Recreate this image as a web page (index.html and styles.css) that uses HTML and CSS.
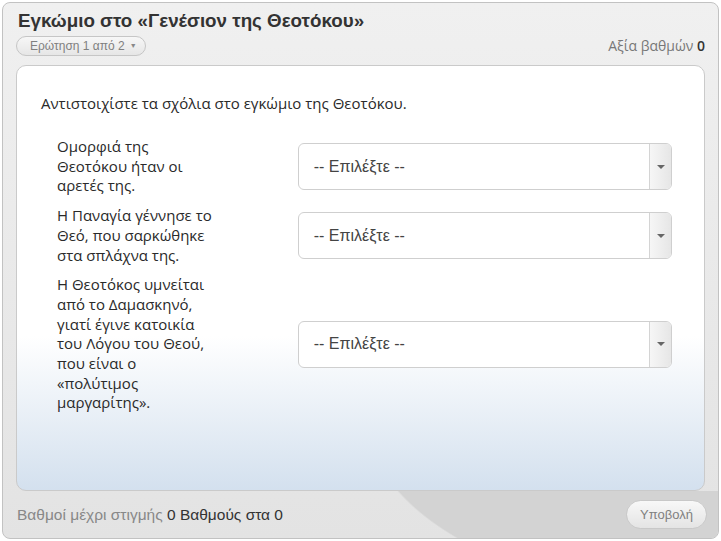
FILE: index.html
```html
<!DOCTYPE html>
<html lang="el">
<head>
<meta charset="utf-8">
<title>Εγκώμιο στο «Γενέσιον της Θεοτόκου»</title>
<link rel="stylesheet" href="styles.css">
</head>
<body>
<div class="quiz">
  <header class="quiz-head">
    <h1 class="quiz-title">Εγκώμιο στο «Γενέσιον της Θεοτόκου»</h1>
    <div class="quiz-meta">
      <button class="q-pill">Ερώτηση 1 από 2 <span class="caret">▼</span></button>
      <div class="worth">Αξία βαθμών <b>0</b></div>
    </div>
  </header>
  <main class="panel">
    <p class="instr">Αντιστοιχίστε τα σχόλια στο εγκώμιο της Θεοτόκου.</p>
    <div class="rows">
      <div class="row">
        <div class="label">Ομορφιά της Θεοτόκου ήταν οι αρετές της.</div>
        <div class="select"><span class="sel-text">-- Επιλέξτε --</span><span class="sel-arrow"><span class="tri"></span></span></div>
      </div>
      <div class="row">
        <div class="label">Η Παναγία γέννησε το Θεό, που σαρκώθηκε στα σπλάχνα της.</div>
        <div class="select"><span class="sel-text">-- Επιλέξτε --</span><span class="sel-arrow"><span class="tri"></span></span></div>
      </div>
      <div class="row">
        <div class="label">Η Θεοτόκος υμνείται από το Δαμασκηνό, γιατί έγινε κατοικία του Λόγου του Θεού, που είναι ο «πολύτιμος μαργαρίτης».</div>
        <div class="select"><span class="sel-text">-- Επιλέξτε --</span><span class="sel-arrow"><span class="tri"></span></span></div>
      </div>
    </div>
  </main>
  <footer class="quiz-foot">
    <div class="score">Βαθμοί μέχρι στιγμής <b>0 Βαθμούς στα 0</b></div>
    <button class="submit">Υποβολή</button>
  </footer>
</div>
</body>
</html>
```
FILE: styles.css
```css
html, body {
  margin: 0;
  padding: 0;
  background: #ffffff;
}
body {
  padding: 2px;
  font-family: "Liberation Sans", Arial, sans-serif;
}
.quiz {
  box-sizing: border-box;
  height: 537px;
  width: 717px;
  border: 1px solid #c2c2c2;
  border-radius: 8px;
  display: flex;
  flex-direction: column;
  background: linear-gradient(#f0f0f0, #e3e3e3);
  overflow: hidden;
}
.quiz-head {
  padding: 7px 13px 0 13px;
}
.quiz-title {
  margin: 0 0 0 2px;
  font-size: 18.8px;
  line-height: 22px;
  font-weight: bold;
  color: #333;
}
.quiz-meta {
  display: flex;
  justify-content: space-between;
  align-items: center;
  margin-top: 3px;
  height: 21px;
}
.q-pill {
  font-family: "Liberation Sans", Arial, sans-serif;
  font-size: 12px;
  color: #808080;
  height: 20px;
  padding: 0 8px 0 13px;
  border: 1px solid #c6c6c6;
  border-radius: 10px;
  background: linear-gradient(#f7f7f7, #e6e6e6);
  display: flex;
  align-items: center;
  gap: 5px;
}
.caret {
  font-size: 7px;
  color: #888;
}
.worth {
  font-family: "Open Sans", sans-serif;
  font-size: 14px;
  color: #777;
}
.worth b {
  color: #333;
  font-weight: 600;
}
.panel {
  box-sizing: border-box;
  margin: 9px 13px 0 13px;
  height: 426px;
  border: 1px solid #cacaca;
  border-radius: 10px;
  background: linear-gradient(#ffffff 0, #ffffff 270px, #d3e0ee 426px);
  padding: 27px 32px 0 24px;
  font-family: "Open Sans", sans-serif;
  color: #2a2a2a;
}
.instr {
  margin: 0;
  font-size: 15px;
  line-height: 20px;
}
.rows {
  margin-top: 24px;
  display: flex;
  flex-direction: column;
  gap: 10px;
}
.row {
  display: flex;
  align-items: center;
}
.label {
  box-sizing: border-box;
  width: 257px;
  padding-left: 16px;
  padding-right: 82px;
  font-size: 15px;
  line-height: 19.7px;
}
.select {
  box-sizing: border-box;
  width: 375px;
  height: 47px;
  border: 1px solid #cfcfcf;
  border-radius: 6px;
  background: #fff;
  display: flex;
  align-items: center;
  overflow: hidden;
}
.sel-text {
  flex: 1;
  padding-left: 15px;
  font-family: "Liberation Sans", Arial, sans-serif;
  font-size: 16px;
  color: #444;
}
.sel-arrow {
  width: 21px;
  align-self: stretch;
  border-left: 1px solid #d4d4d4;
  background: linear-gradient(90deg, #f6f6f6, #e6e6e6);
  display: flex;
  align-items: center;
  justify-content: center;
}
.tri {
  width: 0;
  height: 0;
  border-left: 4px solid transparent;
  border-right: 4px solid transparent;
  border-top: 4px solid #666;
}
.quiz-foot {
  flex: 1;
  display: flex;
  align-items: center;
  justify-content: space-between;
  padding: 0 11px 0 14px;
  background: radial-gradient(ellipse 434px 190px at 800px -67px, #d3d3d3 0 99.5%, transparent 100%);
}
.score {
  font-size: 15.5px;
  color: #888;
}
.score b {
  font-weight: normal;
  color: #333;
}
.submit {
  font-family: "Liberation Sans", Arial, sans-serif;
  font-size: 13px;
  color: #808080;
  height: 29px;
  width: 81px;
  border: 1px solid #c8c8c8;
  border-radius: 15px;
  background: linear-gradient(#f8f8f8, #e4e4e4);
}
```
